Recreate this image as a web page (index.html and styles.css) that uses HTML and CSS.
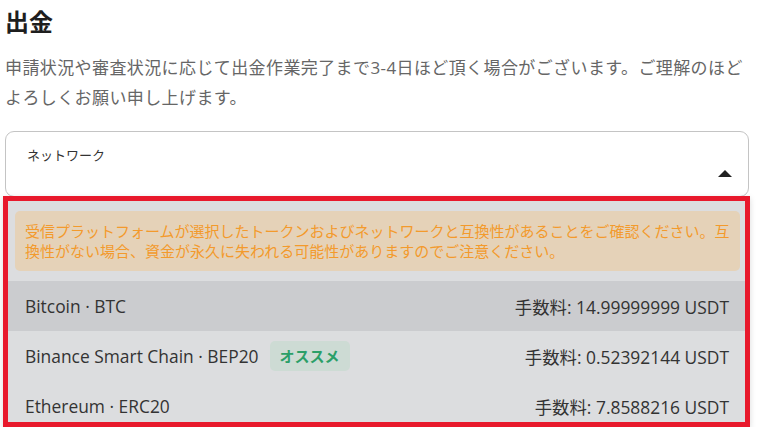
FILE: index.html
```html
<!DOCTYPE html>
<html lang="ja">
<head>
    <meta name="viewport" content="width=device-width, initial-scale=1">
    <meta charset="UTF-8">
    <title>出金</title>
    <link rel="stylesheet" href="styles.css">
</head>
<body>
    <div class="container">
        <h1 class="title">出金</h1>
        <p class="lead">申請状況や審査状況に応じて出金作業完了まで3-4日ほど頂く場合がございます。ご理解のほどよろしくお願い申し上げます。</p>

        <div class="select">
            <span class="select-label">ネットワーク</span>
            <svg class="select-arrow" width="14" height="7" viewBox="0 0 14 7">
                <polygon points="0,7 7,0 14,7" fill="#222"/>
            </svg>
        </div>

        <div class="dropdown">
            <div class="notice">受信プラットフォームが選択したトークンおよびネットワークと互換性があることをご確認ください。互換性がない場合、資金が永久に失われる可能性がありますのでご注意ください。</div>
            <ul class="options">
                <li class="option active">
                    <span class="option-name">Bitcoin · BTC</span>
                    <span class="option-fee">手数料: 14.99999999 USDT</span>
                </li>
                <li class="option">
                    <span class="option-name">Binance Smart Chain · BEP20 <span class="badge">オススメ</span></span>
                    <span class="option-fee">手数料: 0.52392144 USDT</span>
                </li>
                <li class="option">
                    <span class="option-name">Ethereum · ERC20</span>
                    <span class="option-fee">手数料: 7.8588216 USDT</span>
                </li>
            </ul>
        </div>
    </div>
</body>
</html>
```

FILE: styles.css
```css
body {
    margin: 0;
    padding: 0;
    background-color: #fff;
    font-family: "Open Sans", "Noto Sans CJK JP", sans-serif;
    color: #333;
}

.container {
    width: 744px;
    padding: 0 11px 0 5px;
}

.title {
    margin: 0;
    padding-top: 4px;
    font-size: 24px;
    line-height: 36px;
    font-weight: 700;
    color: #1e1e1e;
}

.lead {
    margin: 13px 0 0;
    font-size: 17px;
    line-height: 30px;
    letter-spacing: 0.4px;
    color: #666;
}

.select {
    margin-top: 18px;
    height: 66px;
    border: 1px solid #c4c4c4;
    border-radius: 9px;
    box-sizing: border-box;
    padding: 14px 16px 0 21px;
    display: flex;
    justify-content: space-between;
    align-items: flex-start;
}

.select-label {
    font-size: 13px;
    line-height: 18px;
    color: #333;
}

.select-arrow {
    margin-top: 24px;
}

.dropdown {
    margin: -1px -1px 0 -2px;
    height: 231px;
    border: 5px solid #e8192c;
    box-sizing: border-box;
    background-color: #dcdddf;
    overflow: hidden;
    box-shadow: 0 2px 6px rgba(0, 0, 0, 0.15);
}

.notice {
    margin: 10px 5px 10px 7px;
    padding: 10px 5px 10px 10px;
    background-color: #e5d2b8;
    border-radius: 5px;
    color: #f39a2c;
    font-size: 15px;
    line-height: 20px;
}

.options {
    list-style: none;
    margin: 0;
    padding: 0;
}

.option {
    height: 50px;
    padding: 0 16px 0 17px;
    display: flex;
    justify-content: space-between;
    align-items: center;
    font-size: 17.4px;
    color: #333;
}

.option.active {
    background-color: #cbcccf;
}

.option-name {
    display: flex;
    align-items: center;
}

.badge {
    margin-left: 11px;
    padding: 0 10px;
    height: 30px;
    line-height: 30px;
    border-radius: 5px;
    background-color: #cddbd4;
    color: #2b9f68;
    font-size: 15px;
    font-weight: 700;
}
```
